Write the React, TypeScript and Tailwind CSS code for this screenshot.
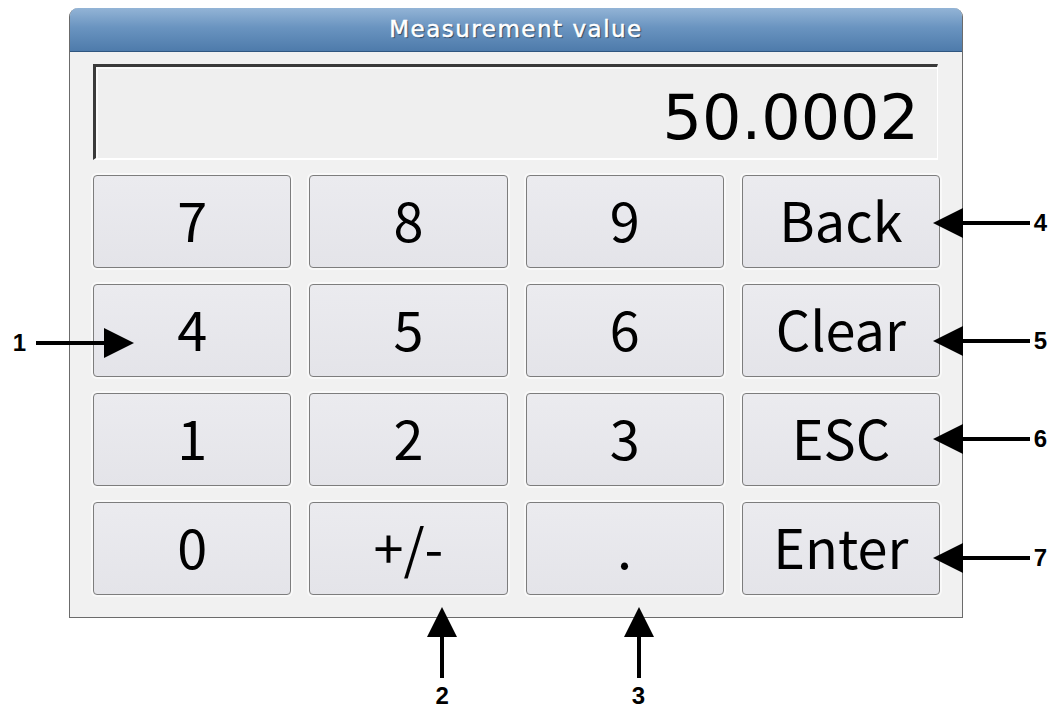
import React from "react";

type Callout = { side: "left" | "right" | "bottom"; label: string; className: string };

type Key = { text: string; callout?: Callout };

const keys: Key[] = [
	{ text: "7" },
	{ text: "8" },
	{ text: "9" },
	{ text: "Back", callout: { side: "right", label: "4", className: "left-[190px] top-[32px]" } },
	{ text: "4", callout: { side: "left", label: "1", className: "left-[-91px] top-[43px]" } },
	{ text: "5" },
	{ text: "6" },
	{ text: "Clear", callout: { side: "right", label: "5", className: "left-[190px] top-[41px]" } },
	{ text: "1" },
	{ text: "2" },
	{ text: "3" },
	{ text: "ESC", callout: { side: "right", label: "6", className: "left-[190px] top-[30px]" } },
	{ text: "0" },
	{ text: "+/-", callout: { side: "bottom", label: "2", className: "left-[117px] top-[104px]" } },
	{ text: ".", callout: { side: "bottom", label: "3", className: "left-[97px] top-[104px]" } },
	{ text: "Enter", callout: { side: "right", label: "7", className: "left-[190px] top-[40px]" } },
];

const labelFont = "text-[24px] leading-none font-bold text-black [font-family:'Liberation_Sans',Arial,sans-serif]";

function CalloutMark({ callout }: { callout: Callout }) {
	if (callout.side === "left") {
		return (
			<div className={`pointer-events-none absolute flex items-center ${callout.className}`}>
				<span className={`w-[33px] ${labelFont}`}>{callout.label}</span>
				<svg width={98} height={30} viewBox="0 0 98 30">
					<rect x={0} y={13} width={70} height={4} fill="#000" />
					<polygon points="98,15 68,0 68,30" fill="#000" />
				</svg>
			</div>
		);
	}
	if (callout.side === "right") {
		return (
			<div className={`pointer-events-none absolute flex items-center ${callout.className}`}>
				<svg width={97} height={30} viewBox="0 0 97 30">
					<polygon points="0,15 30,0 30,30" fill="#000" />
					<rect x={29} y={13} width={68} height={4} fill="#000" />
				</svg>
				<span className={`pl-[4px] ${labelFont}`}>{callout.label}</span>
			</div>
		);
	}
	return (
		<div className={`pointer-events-none absolute flex flex-col items-center gap-[6px] ${callout.className}`}>
			<svg width={30} height={71} viewBox="0 0 30 71">
				<polygon points="15,0 0,30 30,30" fill="#000" />
				<rect x={13} y={29} width={4} height={42} fill="#000" />
			</svg>
			<span className={labelFont}>{callout.label}</span>
		</div>
	);
}

export default function App() {
	return (
		<div className="h-[709px] w-[1053px] overflow-hidden bg-white pt-[8px] pl-[69px]">
			<div className="flex w-[894px] flex-col rounded-t-[9px] border-x border-b border-[#6b6b6b] bg-[#f1f1f1]">
				<header className="flex h-[44px] items-center justify-center rounded-t-[8px] border-b border-[#2f5680] bg-[linear-gradient(to_bottom,#93b4d6,#6a94c0_45%,#4e7bab)]">
					<span className="text-[23px] tracking-[1.5px] text-white [-webkit-text-stroke:0.5px_white] [font-family:'DejaVu_Sans',sans-serif] [text-shadow:1px_1px_1px_#1d3550]">
						Measurement value
					</span>
				</header>
				<section className="flex flex-col px-[23px] pt-[12px] pb-[22px]">
					<div className="flex h-[96px] w-[845px] items-center justify-end border-t-[3px] border-l-[3px] border-r border-b-2 border-t-[#3a3a3a] border-l-[#3a3a3a] border-r-white border-b-white bg-[#efefef] pt-[10px] pr-[18px] shadow-[inset_2px_2px_0_#fafafa]">
						<span className="text-[62px] leading-none text-black [font-family:'DejaVu_Sans',sans-serif]">50.0002</span>
					</div>
					<div className="mt-[15px] grid w-[847px] grid-cols-4 gap-x-[18px] gap-y-[16px]">
						{keys.map((k) => (
							<button
								key={k.text}
								className="relative flex h-[93px] items-center justify-center rounded-[4px] border border-[#7d7d7d] bg-[linear-gradient(to_bottom,#ebebef,#e4e4e9)] pb-[6px] text-[54px] leading-none text-black shadow-[0_0_0_2px_#f9f9f9] [font-family:'Noto_Sans_CJK_JP',sans-serif]"
							>
								{k.text}
								{k.callout && <CalloutMark callout={k.callout} />}
							</button>
						))}
					</div>
				</section>
			</div>
		</div>
	);
}
